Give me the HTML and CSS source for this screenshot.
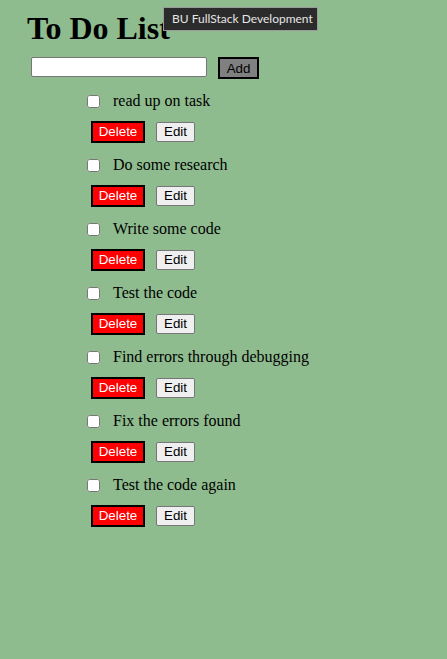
FILE: index.html
```html
<!DOCTYPE html>
<html lang="en">
<head>
<meta charset="utf-8">
<title>To Do List</title>
<link rel="stylesheet" href="styles.css">
</head>
<body>
<h1 class="title">To Do List</h1>
<div class="tooltip">BU FullStack Development</div>
<form class="add-form">
  <input class="task-input" type="text">
  <button class="btn-add" type="button">Add</button>
</form>
<ul class="task-list">
  <li class="task">
    <div class="task-line"><input class="task-check" type="checkbox"><span class="task-text">read up on task</span></div>
    <div class="task-actions"><button class="btn-delete" type="button">Delete</button><button class="btn-edit" type="button">Edit</button></div>
  </li>
  <li class="task">
    <div class="task-line"><input class="task-check" type="checkbox"><span class="task-text">Do some research</span></div>
    <div class="task-actions"><button class="btn-delete" type="button">Delete</button><button class="btn-edit" type="button">Edit</button></div>
  </li>
  <li class="task">
    <div class="task-line"><input class="task-check" type="checkbox"><span class="task-text">Write some code</span></div>
    <div class="task-actions"><button class="btn-delete" type="button">Delete</button><button class="btn-edit" type="button">Edit</button></div>
  </li>
  <li class="task">
    <div class="task-line"><input class="task-check" type="checkbox"><span class="task-text">Test the code</span></div>
    <div class="task-actions"><button class="btn-delete" type="button">Delete</button><button class="btn-edit" type="button">Edit</button></div>
  </li>
  <li class="task">
    <div class="task-line"><input class="task-check" type="checkbox"><span class="task-text">Find errors through debugging</span></div>
    <div class="task-actions"><button class="btn-delete" type="button">Delete</button><button class="btn-edit" type="button">Edit</button></div>
  </li>
  <li class="task">
    <div class="task-line"><input class="task-check" type="checkbox"><span class="task-text">Fix the errors found</span></div>
    <div class="task-actions"><button class="btn-delete" type="button">Delete</button><button class="btn-edit" type="button">Edit</button></div>
  </li>
  <li class="task">
    <div class="task-line"><input class="task-check" type="checkbox"><span class="task-text">Test the code again</span></div>
    <div class="task-actions"><button class="btn-delete" type="button">Delete</button><button class="btn-edit" type="button">Edit</button></div>
  </li>
</ul>
</body>
</html>
```
FILE: styles.css
```css
html, body {
  margin: 0;
  padding: 0;
  background: #8fbc8f;
}
body {
  position: relative;
  min-height: 659px;
  padding: 10px 0 0 27px;
  box-sizing: border-box;
  font-family: "Liberation Serif", "Times New Roman", serif;
  color: #000;
}
.title {
  margin: 0;
  height: 36px;
  font-size: 32px;
  line-height: 36px;
  font-weight: bold;
}
.tooltip {
  position: absolute;
  left: 163px;
  top: 7px;
  width: 155px;
  height: 24px;
  box-sizing: border-box;
  padding: 0 0 0 8px;
  background: #2b2b2b;
  border: 1px solid #9a9a9a;
  color: #e6e6e6;
  font-family: Lato, "Noto Sans", sans-serif;
  font-size: 12px;
  line-height: 22px;
  white-space: nowrap;
  overflow: hidden;
}
.add-form {
  display: flex;
  align-items: flex-start;
  gap: 11px;
  margin: 11px 0 0 4px;
}
.task-input {
  box-sizing: border-box;
  width: 176px;
  height: 20px;
  margin: 0;
  border: 1px solid #767676;
  border-radius: 2px;
  background: #fff;
  padding: 1px 2px;
}
.btn-add {
  box-sizing: border-box;
  width: 41px;
  height: 22px;
  margin: 0;
  padding: 0;
  background: #808080;
  border: 2px solid #000;
  font-family: "Liberation Sans", Arial, sans-serif;
  font-size: 13.33px;
  color: #000;
}
.task-list {
  list-style: none;
  margin: 10px 0 0 0;
  padding: 0 0 0 56px;
  display: flex;
  flex-direction: column;
  gap: 11px;
}
.task {
  display: flex;
  flex-direction: column;
  gap: 8px;
}
.task-line {
  display: flex;
  align-items: center;
  height: 24px;
  font-size: 16px;
}
.task-check {
  box-sizing: border-box;
  width: 13px;
  height: 13px;
  margin: 0 0 0 4px;
}
.task-text {
  margin-left: 13px;
  line-height: 24px;
}
.task-actions {
  display: flex;
  align-items: center;
  gap: 11px;
  padding-left: 8px;
  height: 21px;
}
.btn-delete {
  box-sizing: border-box;
  width: 54px;
  height: 22px;
  margin: 0;
  padding: 0;
  background: #ff0000;
  border: 2px solid #000;
  color: #fff;
  font-family: "Liberation Sans", Arial, sans-serif;
  font-size: 13.33px;
}
.btn-edit {
  box-sizing: border-box;
  width: 39px;
  height: 20px;
  margin: 0;
  padding: 0;
  background: #efefef;
  border: 1px solid #767676;
  border-radius: 2px;
  color: #000;
  font-family: "Liberation Sans", Arial, sans-serif;
  font-size: 13.33px;
}
```
